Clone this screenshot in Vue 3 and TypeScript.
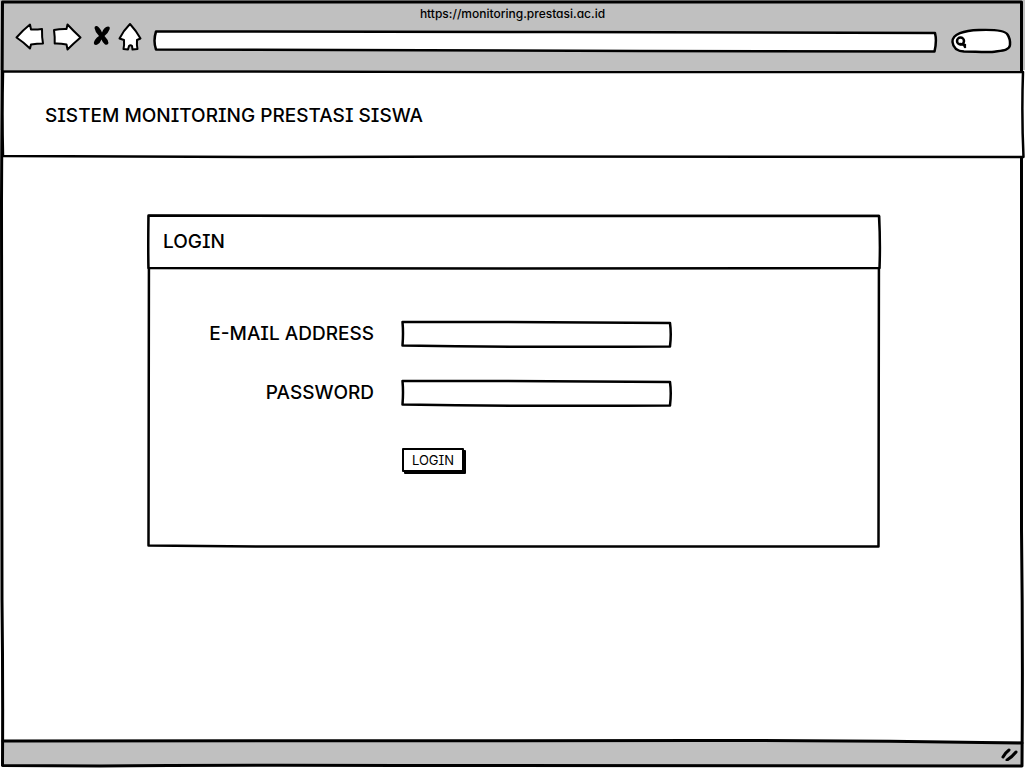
<script setup lang="ts">
import { ref } from 'vue'

interface Field {
  id: string
  label: string
  type: string
  autocomplete: string
}

const url = 'https://monitoring.prestasi.ac.id'
const address = ref('')
const query = ref('')
const values = ref<Record<string, string>>({ email: '', password: '' })

const fields: Field[] = [
  { id: 'email', label: 'E-MAIL ADDRESS', type: 'email', autocomplete: 'username' },
  { id: 'password', label: 'PASSWORD', type: 'password', autocomplete: 'current-password' },
]
</script>

<template>
  <div class="window">
    <header class="chrome">
      <p class="url">{{ url }}</p>
      <div class="tools">
        <button type="button" class="tool" aria-label="Back">
          <svg viewBox="14 20 32 32" width="32" height="32">
            <path class="shape" d="M16.5 37.5Q23 30 30 24.5L31 29.5Q36 29.8 42 29Q41.8 37 43 43.5Q37 43.6 31 44.5L30 48.5Q24 42.5 16.5 37.5Z" />
          </svg>
        </button>
        <button type="button" class="tool" aria-label="Forward">
          <svg viewBox="50 20 32 32" width="32" height="32">
            <path class="shape" d="M54 30Q60 28.8 66.5 29L67.5 24.5Q74 31.5 80.5 37.5Q74 43 67.5 49.5L66.5 44.5Q60 43.2 54.7 43.5Q55 37 54 30Z" />
          </svg>
        </button>
        <button type="button" class="tool" aria-label="Stop">
          <svg viewBox="86 20 28 32" width="28" height="32">
            <path d="M94.5 28Q94.5 25.5 97 26Q100 27.5 102 32.5Q104 27 108 26.5Q110.500 26.500 109.500 29.500Q108 33.500 104.500 36Q108 39.500 108.500 43Q108 45.500 105 44.500Q102.500 42.500 101.500 39.500Q100 43.500 97 44.800Q94 45.500 93.800 43Q94.500 39 99 36Q95 32 94.500 28Z" />
          </svg>
        </button>
        <button type="button" class="tool" aria-label="Home">
          <svg viewBox="118 20 28 32" width="28" height="32">
            <path class="shape" d="M130 24Q136 30.500 140.500 38.500L137 40Q136.600 45 137.500 49L132.500 49.500L132 46Q130.500 44.500 129 46L128 49.500L123.500 49Q124.400 45 124 40L119.500 38.500Q123.500 30.500 130 24Z" />
          </svg>
        </button>
        <div class="address">
          <svg class="frame" viewBox="150 24 791 32" preserveAspectRatio="none" aria-hidden="true">
            <path d="M156 31.500L560 32Q760 32.500 935 33Q937 41 934.500 51.500L640 51Q400 49.500 156 49.500Q153 41 156 31.500Z" />
          </svg>
          <input v-model="address" type="text" aria-label="Address" />
        </div>
        <div class="search">
          <svg class="frame" viewBox="945 24 70 32" preserveAspectRatio="none" aria-hidden="true">
            <path d="M952.500 42C952 34 964 30.500 979 30C993 29.500 1005 30.500 1007.500 34.500Q1010.500 39 1010 45C1009.500 51 1000 50.500 992 52C982 52.500 974 51.500 964 51.500C956 51 953 47 952.500 42Z" />
            <circle cx="960.500" cy="41" r="3.500" />
            <path d="M960 44L965 45M963.500 44L965 47" />
          </svg>
          <input v-model="query" type="search" aria-label="Search" />
        </div>
      </div>
    </header>

    <div class="banner">
      <svg class="frame" viewBox="0 0 1025 88" preserveAspectRatio="none" aria-hidden="true">
        <path d="M3 1.500L180 1.500L500 2L1023 2Q1021.500 45 1023.500 87L500 86.500Q250 87.500 3 86Q2 45 3 1.500Z" />
      </svg>
      <h1>SISTEM MONITORING PRESTASI SISWA</h1>
    </div>

    <main class="content">
      <section class="panel" aria-labelledby="panel-title">
        <svg class="frame" viewBox="0 0 734 334" preserveAspectRatio="none" aria-hidden="true">
          <path d="M2 2L732 2L731.500 332.500Q360 333.500 110 332.500L1.500 331.500Z" />
        </svg>
        <div class="panel-head">
          <svg class="frame" viewBox="0 0 734 56" preserveAspectRatio="none" aria-hidden="true">
            <path d="M1.500 1.500L180 2L732 2Q733.500 28 732.500 54L360 54.500L1.500 54Q1 38 1.500 1.500Z" />
          </svg>
          <h2 id="panel-title">LOGIN</h2>
        </div>
        <form class="form" @submit.prevent>
          <div v-for="field in fields" :key="field.id" class="row">
            <label :for="field.id">{{ field.label }}</label>
            <div class="field">
              <svg class="frame" viewBox="0 0 272 28" preserveAspectRatio="none" aria-hidden="true">
                <path d="M1.500 2Q140 1.500 269 3Q270.500 14 269 26.500Q130 27.500 1.500 25.500Q2.500 13 1.500 2Z" />
              </svg>
              <input :id="field.id" v-model="values[field.id]" :type="field.type" :autocomplete="field.autocomplete" />
            </div>
          </div>
          <button type="submit" class="submit">LOGIN</button>
        </form>
      </section>
    </main>

    <footer class="status">
      <svg class="frame" viewBox="0 0 1025 29" preserveAspectRatio="none" aria-hidden="true">
        <path d="M3 2L700 1.500Q860 1.500 1022 4" />
      </svg>
      <svg class="grip" viewBox="0 0 18 14" width="18" height="14" aria-hidden="true">
        <path d="M3 10Q5 6 9 3M7 13Q12 10 16 5" />
      </svg>
    </footer>

    <svg class="frame outline" viewBox="0 0 1025 768" preserveAspectRatio="none" aria-hidden="true">
      <path d="M2.500 2L1021.500 2L1021.500 530Q1023 650 1022 766L400 765.500Q200 765 100 766L2.500 765.500Q3 680 2 600L1.500 200Z" />
    </svg>
  </div>
</template>

<style>
body {
  margin: 0;
  background: #fff;
}
</style>

<style scoped>
.window {
  position: relative;
  display: flex;
  flex-direction: column;
  min-height: 100vh;
  color: #000;
  font-family: Inter, Lato, sans-serif;
  /* Serifed capital I and single-storey a */
  font-feature-settings: "cv08" 1, "cv11" 1;
  font-size: 19px;
  font-weight: 500;
  line-height: 24px;
}

.window,
.window * {
  box-sizing: border-box;
}

.frame {
  position: absolute;
  inset: 0;
  width: 100%;
  height: 100%;
  pointer-events: none;
  overflow: visible;
}

.frame path,
.frame circle {
  fill: #fff;
  stroke: #000;
  stroke-width: 2.5px;
  stroke-linejoin: round;
  stroke-linecap: round;
  vector-effect: non-scaling-stroke;
}

.outline path,
.status .frame path {
  fill: none;
  stroke-width: 3px;
}

.chrome {
  height: 70px;
  padding-top: 4px;
  background: #c0c0c0;
}

.url {
  margin: 0;
  font-size: 12px;
  line-height: 20px;
  text-align: center;
}

.tools {
  display: flex;
  gap: 4px;
  height: 32px;
  padding: 0 10px 0 14px;
}

.tool {
  display: flex;
  flex: none;
  padding: 0;
  border: 0;
  background: none;
}

.tool svg {
  display: block;
  margin-top: -4px;
}

.shape {
  fill: #fff;
  stroke: #000;
  stroke-width: 2px;
  stroke-linejoin: round;
}

.address,
.search,
.field {
  position: relative;
}

.address {
  flex: 1;
  padding: 9px 8px 6px;
}

.search {
  flex: none;
  width: 70px;
  padding: 9px 8px 6px 24px;
}

input {
  position: relative;
  display: block;
  width: 100%;
  height: 100%;
  padding: 0 4px;
  border: 0;
  outline: 0;
  background: transparent;
  color: inherit;
  font: inherit;
  font-size: 12px;
  appearance: none;
}

.banner {
  position: relative;
  z-index: 1;
  height: 88px;
  padding: 34px 45px 30px;
}

h1,
h2 {
  position: relative;
  margin: 0;
  font-size: 19px;
  font-weight: 500;
  line-height: 24px;
}

.content {
  flex: 1;
  padding: 56px 144px 56px 147px;
}

.panel {
  position: relative;
  height: 334px;
}

.panel-head {
  position: relative;
  height: 56px;
  padding: 16px;
}

.form {
  position: relative;
  display: grid;
  gap: 31px;
  padding: 50px 0 0;
}

.row {
  display: grid;
  grid-template-columns: 227px 272px;
  gap: 27px;
  align-items: start;
}

.row label {
  line-height: 28px;
  text-align: right;
}

.field {
  height: 28px;
  padding: 4px;
}

.submit {
  justify-self: start;
  width: 62px;
  height: 24px;
  margin: 10px 0 0 255px;
  padding: 0;
  border: 2px solid #000;
  border-radius: 1px;
  background: #fff;
  box-shadow: 2px 2px 0 #000;
  color: inherit;
  font: inherit;
  font-feature-settings: inherit;
  font-size: 13px;
  font-weight: 400;
  line-height: 20px;
}

.status {
  position: relative;
  display: flex;
  align-items: center;
  justify-content: flex-end;
  height: 29px;
  padding-right: 7px;
}

.status::before {
  content: "";
  position: absolute;
  inset: 2px 2px 3px;
  background: #c0c0c0;
}

.grip {
  position: relative;
}

.grip path {
  fill: none;
  stroke: #000;
  stroke-width: 3px;
  stroke-linecap: round;
}
</style>
